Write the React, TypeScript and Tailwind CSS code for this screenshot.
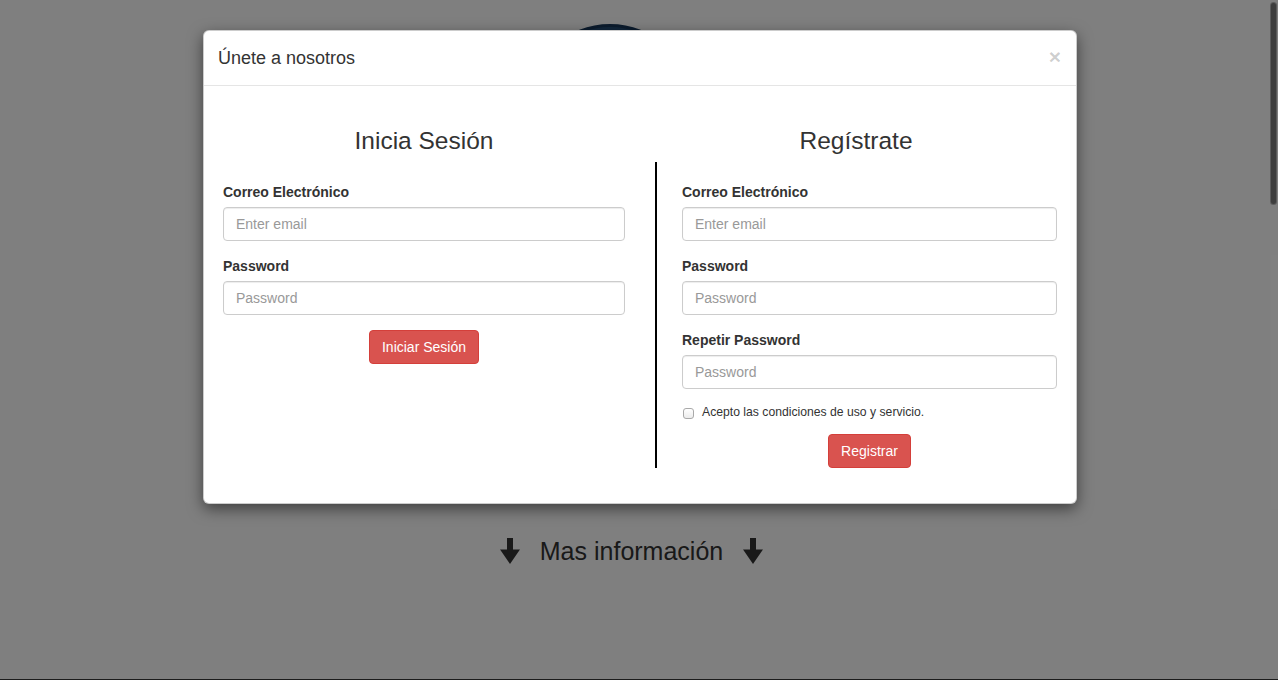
import React from 'react';

function ArrowDown() {
  return (
    <svg width="20" height="26" viewBox="0 0 20 26" className="fill-[#333]">
      <rect x="7" y="0" width="6" height="13" />
      <polygon points="0,11.5 20,11.5 10,26" />
    </svg>
  );
}

function Field({ label, placeholder, type = 'text' }: { label: string; placeholder: string; type?: string }) {
  return (
    <div className="mb-[15px]">
      <label className="block mb-[5px] text-[14px] leading-[20px] font-bold text-[#333]">{label}</label>
      <input
        type={type}
        placeholder={placeholder}
        className="block w-full h-[34px] px-[12px] text-[14px] text-[#555] placeholder:text-[#999] bg-white border border-[#ccc] rounded-[4px] shadow-[inset_0_1px_1px_rgba(0,0,0,0.075)] outline-none"
      />
    </div>
  );
}

function RedButton({ children }: { children: React.ReactNode }) {
  return (
    <button className="h-[34px] px-[12px] text-[14px] leading-[20px] text-white bg-[#d9534f] border border-[#d43f3a] rounded-[4px]">
      {children}
    </button>
  );
}

export default function App() {
  return (
    <div className="relative w-[1278px] h-[680px] overflow-hidden bg-white font-['Liberation_Sans',Arial,sans-serif] text-[#333]">
      {/* page behind the modal */}
      <div className="flex flex-col w-[1263px] pt-[24px]">
        <div className="ml-[527px] w-[166px] h-[166px] rounded-full bg-[#234d78] border-[3px] border-[#17375a]" />
        <div className="mt-[346px] flex items-center justify-center gap-[20px] h-[30px]">
          <ArrowDown />
          <span className="text-[25px] leading-[30px] text-[#333]">Mas información</span>
          <ArrowDown />
        </div>
      </div>

      {/* backdrop */}
      <div className="absolute inset-0 bg-black/50" />

      {/* scrollbar thumb */}
      <div className="absolute right-[1px] top-[2px] w-[7px] h-[203px] rounded-full bg-[#3e3e3e] border border-[#8a8a8a]/40" />
      <div className="absolute left-0 right-0 bottom-0 h-[1px] bg-[#1c1c1c]" />

      {/* modal */}
      <div className="absolute inset-0 pl-[203px] pt-[30px]">
        <div className="w-[874px] bg-white border border-black/20 rounded-[6px] shadow-[0_5px_15px_rgba(0,0,0,0.5)]">
          <div className="flex items-center justify-between pl-[14px] pr-[15px] py-[15px] border-b border-[#e5e5e5]">
            <h4 className="text-[18px] leading-[24px] text-[#333]">Únete a nosotros</h4>
            <button className="-mt-[4px] text-[21px] leading-none font-bold text-black/20">×</button>
          </div>

          <div className="px-[19px] pt-[42px] pb-[35px]">
            <div className="grid grid-cols-2 gap-[30px] mb-[8px]">
              <h3 className="text-center text-[24.5px] leading-[26px] text-[#333]">Inicia Sesión</h3>
              <h3 className="text-center text-[24.5px] leading-[26px] text-[#333]">Regístrate</h3>
            </div>

            <div className="grid grid-cols-2 gap-[30px] items-start">
              <form className="pt-[20px]">
                <Field label="Correo Electrónico" placeholder="Enter email" type="email" />
                <Field label="Password" placeholder="Password" type="password" />
                <div className="flex justify-center">
                  <RedButton>Iniciar Sesión</RedButton>
                </div>
              </form>

              <div className="border-l-2 border-black pl-[25px] pt-[20px]">
                <Field label="Correo Electrónico" placeholder="Enter email" type="email" />
                <Field label="Password" placeholder="Password" type="password" />
                <div>
                  <label className="block mb-[5px] text-[14px] leading-[20px] font-bold text-[#333]">Repetir Password</label>
                  <input
                    type="password"
                    placeholder="Password"
                    className="block w-full h-[34px] px-[12px] text-[14px] placeholder:text-[#999] border border-[#ccc] rounded-[4px] shadow-[inset_0_1px_1px_rgba(0,0,0,0.075)] outline-none"
                  />
                </div>
                <label className="flex items-center gap-[8px] mt-[15px] h-[17px] text-[12.2px] leading-[17px] text-[#333]">
                  <input
                    type="checkbox"
                    className="appearance-none ml-[1px] mt-[2px] w-[11px] h-[11px] rounded-[3px] border border-[#a9a9a9] bg-gradient-to-b from-white to-[#ececec]"
                  />
                  Acepto las condiciones de uso y servicio.
                </label>
                <div className="flex justify-center mt-[13px]">
                  <RedButton>Registrar</RedButton>
                </div>
              </div>
            </div>
          </div>
        </div>
      </div>
    </div>
  );
}
